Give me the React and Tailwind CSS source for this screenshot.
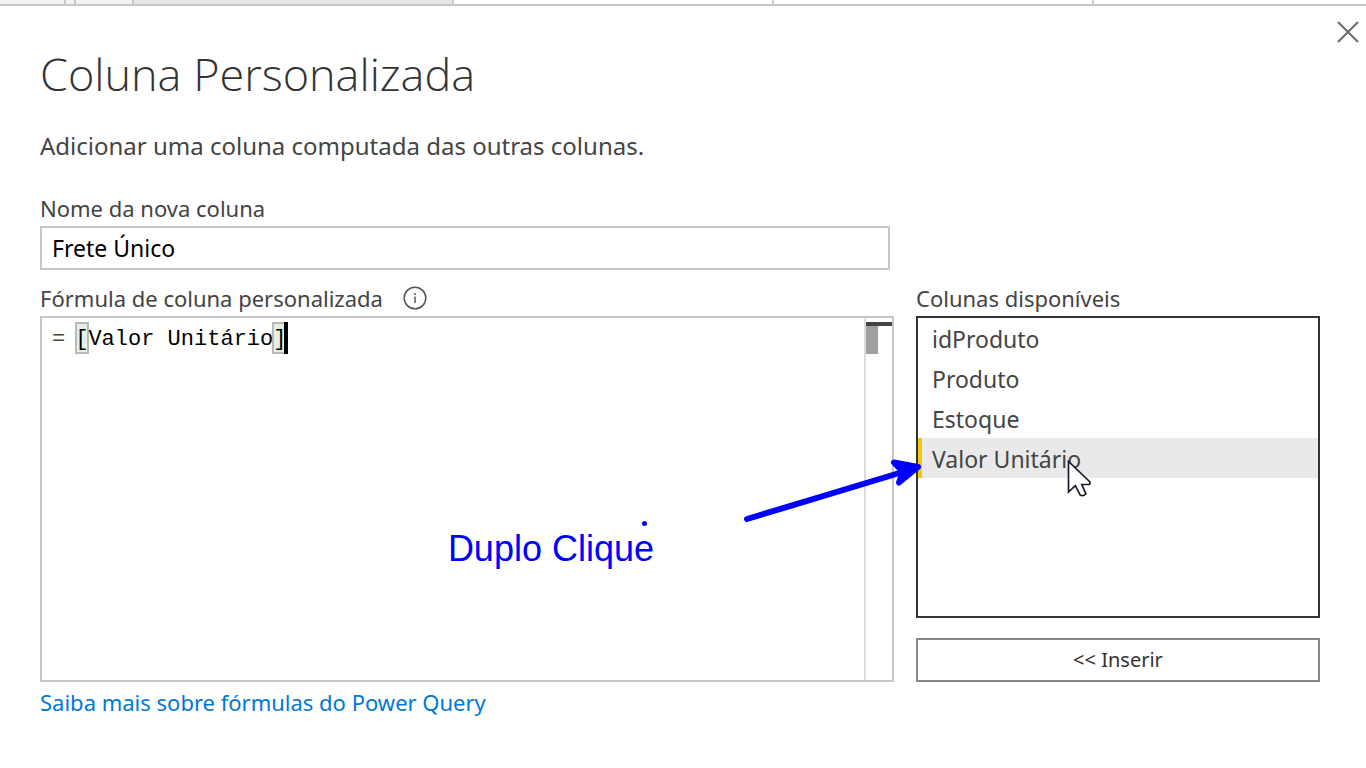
import { useState } from "react";

const COLUMNS = ["idProduto", "Produto", "Estoque", "Valor Unitário"];

function TopStrip() {
  return (
    <div className="flex h-[6px] border-b-2 border-[#c6c6c6] bg-white" aria-hidden="true">
      <div className="w-[66px] border-r-2 border-[#c8c8c8] bg-[#f3f2f1]" />
      <div className="w-[10px] border-r-2 border-[#c8c8c8] bg-[#f3f2f1]" />
      <div className="w-[58px] border-r-2 border-[#c8c8c8] bg-[#f3f2f1]" />
      <div className="w-[320px] border-r-2 border-[#d0d0d0] bg-[#e6e6e6]" />
      <div className="w-[320px] border-r-2 border-[#d0d0d0]" />
      <div className="w-[320px] border-r-2 border-[#d0d0d0]" />
    </div>
  );
}

function InfoIcon() {
  return (
    <svg width="24" height="24" viewBox="0 0 24 24" fill="none" stroke="#555" strokeWidth="1.5" aria-hidden="true">
      <circle cx="12" cy="12" r="10.8" />
      <path d="M12 10.5v6.500M12 7v2" />
    </svg>
  );
}

function FormulaEditor({ value, onChange }) {
  return (
    <div className="relative flex h-[366px] border-2 border-[#c6c6c6] bg-[#fffffe]">
      <span className="pt-1.5 pl-2.5 font-['Liberation_Mono',monospace] text-[22px] leading-8 text-[#444]">=</span>
      <div className="relative ml-2.5 flex-1">
        <div className="absolute top-1 left-0 flex w-[213px] items-start" aria-hidden="true">
          <span className="mr-auto h-8 w-[14px] border-2 border-[#b9b9b9] bg-[#e4f0e6]" />
          <span className="h-8 w-3 border-2 border-r-0 border-[#b9b9b9] bg-[#e4f0e6]" />
          <span className="h-8 w-1 bg-black" />
        </div>
        <textarea
          id="formula"
          value={value}
          onChange={onChange}
          spellCheck={false}
          className="relative block h-full w-full resize-none overflow-hidden bg-transparent pt-1.5 font-['Liberation_Mono',monospace] text-[22px] leading-8 text-black outline-none"
        />
      </div>
      <div className="w-[28px] border-l-2 border-[#dcdcdc] pt-1" aria-hidden="true">
        <div className="h-1 bg-[#444]" />
        <div className="h-7 w-3 bg-[#a0a0a0]" />
      </div>
      <div className="pointer-events-none absolute right-[238px] bottom-[109px] font-['Liberation_Sans',sans-serif] text-[36px] leading-[44px] whitespace-nowrap text-[#0000ff]">
        Duplo Clique
      </div>
      <svg className="pointer-events-none absolute right-[245px] bottom-[154px]" width="5" height="5" aria-hidden="true">
        <circle cx="2.5" cy="2.5" r="2.5" fill="#0000ff" />
      </svg>
    </div>
  );
}

function Arrow() {
  return (
    <svg
      className="pointer-events-none absolute top-[140px] -left-[174px]"
      width="180"
      height="72"
      viewBox="0 0 180 72"
      fill="none"
      stroke="#0000ff"
      strokeWidth="6"
      strokeLinecap="round"
      strokeLinejoin="round"
      aria-hidden="true"
    >
      <path d="M5 63 174 12" />
      <path d="M152 6.500 176 11 157 26.500 161 16Z" fill="#0000ff" />
    </svg>
  );
}

function Pointer() {
  return (
    <svg
      className="pointer-events-none absolute top-[144px] left-[151px]"
      width="26"
      height="38"
      viewBox="0 0 26 38"
      fill="#fff"
      stroke="#1c1b2e"
      strokeWidth="1.7"
      aria-hidden="true"
    >
      <path d="M1.5 1.5V32l6.8-6.4 4.8 9.4q3.200 1.800 5.800-1.200L14.800 24.500H22.500q1-1.500 0-3Z" />
    </svg>
  );
}

export default function App() {
  const [name, setName] = useState("Frete Único");
  const [formula, setFormula] = useState("[Valor Unitário]");
  const [column, setColumn] = useState("Valor Unitário");

  return (
    <div className="min-h-screen bg-white font-['Noto_Sans',sans-serif] text-[#444]">
      <TopStrip />
      <main className="relative pt-10 pr-[46px] pb-8 pl-10">
        <button type="button" aria-label="Fechar" className="absolute top-[14px] right-[6px]">
          <svg width="24" height="24" viewBox="0 0 24 24" stroke="#6b6b6b" strokeWidth="2" aria-hidden="true">
            <path d="M2 2 22 22M22 2 2 22" />
          </svg>
        </button>
        <h1 className="font-['Open_Sans',sans-serif] text-[45px] leading-[56px] font-light text-[#333]">
          Coluna Personalizada
        </h1>
        <p className="mt-7 text-[24px] leading-8">Adicionar uma coluna computada das outras colunas.</p>
        <div className="mt-7 mr-[430px]">
          <label htmlFor="column-name" className="block text-[22px] leading-9">
            Nome da nova coluna
          </label>
          <input
            id="column-name"
            value={name}
            onChange={(e) => setName(e.target.value)}
            className="block h-11 w-full border-2 border-[#c6c6c6] px-2.5 text-[23px] text-black outline-none"
          />
        </div>
        <div className="mt-2.5 flex gap-[22px]">
          <div className="min-w-0 flex-1">
            <div className="flex items-center gap-5 text-[22px] leading-9">
              <label htmlFor="formula">Fórmula de coluna personalizada</label>
              <InfoIcon />
            </div>
            <FormulaEditor value={formula} onChange={(e) => setFormula(e.target.value)} />
            <a href="#ajuda" className="mt-1 inline-block text-[22px] leading-8 text-[#0078d4]">
              Saiba mais sobre fórmulas do Power Query
            </a>
          </div>
          <div className="w-[404px] shrink-0">
            <label htmlFor="columns" className="block text-[22px] leading-9">
              Colunas disponíveis
            </label>
            <div className="relative">
              <select
                id="columns"
                size={4}
                value={column}
                onChange={(e) => setColumn(e.target.value)}
                className="block h-[302px] w-full overflow-hidden border-2 border-[#333] bg-white text-[23px] outline-none"
              >
                {COLUMNS.map((c) => (
                  <option
                    key={c}
                    value={c}
                    className="h-10 px-[14px] pt-[5px] pb-0 text-[#444] checked:bg-[linear-gradient(90deg,#f2c811_4px,#e9e9e9_4px)] checked:text-[#444]"
                  >
                    {c}
                  </option>
                ))}
              </select>
              <Arrow />
              <Pointer />
            </div>
            <button
              type="button"
              onClick={() => setFormula((f) => f + "[" + column + "]")}
              className="mt-5 block h-11 w-full border-2 border-[#868686] bg-white text-[20px] text-[#333]"
            >
              &lt;&lt; Inserir
            </button>
          </div>
        </div>
      </main>
    </div>
  );
}
